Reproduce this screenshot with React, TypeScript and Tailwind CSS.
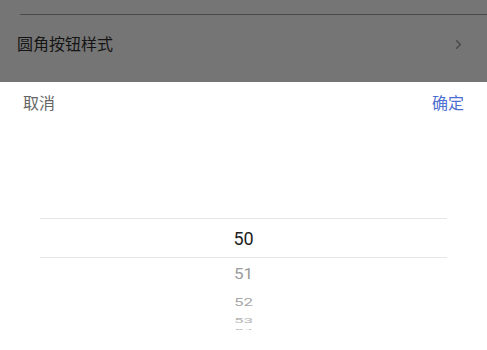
import { ChevronRight } from 'lucide-react';

const items = [
  { value: '51', row: 'h-[32px]', text: 'text-[#9a9a9a] scale-y-[0.88]' },
  { value: '52', row: 'h-[25px]', text: 'text-[#a8a8a8] scale-y-[0.66]' },
  { value: '53', row: 'h-[11px]', text: 'text-[#b4b4b4] scale-y-[0.38]' },
  { value: '54', row: 'h-[6px]', text: 'text-[#b0b0b0] scale-y-[0.07]' },
];

export default function App() {
  return (
    <div
      className="w-[487px] h-[350px] overflow-hidden bg-white"
      style={{ fontFamily: 'Roboto, "Noto Sans CJK SC", sans-serif' }}
    >
      {/* dimmed page behind the sheet */}
      <div className="h-[82px] bg-[#757575]">
        <div className="ml-[20px] h-[15px] border-b border-[#4a4a4a]" />
        <div className="flex items-center justify-between h-[59px] pl-[17px] pr-[21px]">
          <span className="text-[16px] text-[#141414]">圆角按钮样式</span>
          <ChevronRight className="w-[15px] h-[15px] text-[#474747]" strokeWidth={2} />
        </div>
      </div>

      {/* picker sheet */}
      <div className="flex items-center justify-between h-[44px] px-[23px] text-[16px]">
        <span className="text-[#666666]">取消</span>
        <span className="text-[#4c6fd1]">确定</span>
      </div>

      <div className="mx-[40px] mt-[92px]">
        <div className="flex items-center justify-center h-[40px] border-y border-[#e6e6e6] text-[18px] text-[#1e1e1e]">
          50
        </div>
        {items.map((item) => (
          <div key={item.value} className={`flex items-center justify-center ${item.row}`}>
            <span className={`text-[17px] leading-none ${item.text}`}>{item.value}</span>
          </div>
        ))}
      </div>
    </div>
  );
}
